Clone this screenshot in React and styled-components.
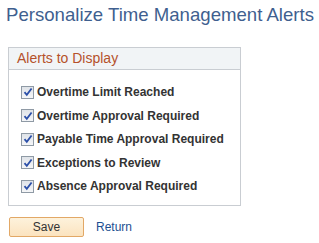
import React, { useState } from 'react'
import styled, { createGlobalStyle } from 'styled-components'

const GlobalStyle = createGlobalStyle`
	body {
		margin: 0;
		background: #fff;
		font-family: "Liberation Sans", Arial, sans-serif;
	}
`

const Page = styled.div`
	padding: 4px 8px 0 8px;
	width: 319px;
	box-sizing: border-box;
`

const Title = styled.h1`
	font-size: 18.6px;
	font-weight: normal;
	color: #3f5f8f;
	margin: 0 0 0 -2px;
	line-height: 22px;
	white-space: nowrap;
`

const Box = styled.div`
	margin-top: 21px;
	width: 233px;
	border: 1px solid #c9cdd2;
	box-sizing: border-box;
	padding-bottom: 11px;
`

const BoxHeader = styled.div`
	height: 21px;
	background: #f1f4f6;
	border-bottom: 1px solid #c9cdd2;
	color: #b5512a;
	font-size: 14px;
	line-height: 21px;
	padding-left: 8px;
`

const List = styled.div`
	display: flex;
	flex-direction: column;
	gap: 7.5px;
	padding: 14px 0 0 12px;
`

const Row = styled.label`
	display: flex;
	align-items: center;
	gap: 3px;
	height: 16px;
	font-size: 12px;
	font-weight: bold;
	color: #333;
	cursor: pointer;
`

const Check = styled.span`
	width: 11px;
	height: 11px;
	border: 1px solid #8f9aa5;
	background: linear-gradient(#dfe3e8, #f5f6f8);
	display: flex;
	align-items: center;
	justify-content: center;
	flex-shrink: 0;
`

const Actions = styled.div`
	display: flex;
	align-items: center;
	gap: 12px;
	margin-top: 11px;
	padding-left: 1px;
`

const SaveButton = styled.button`
	width: 75px;
	height: 20px;
	border: 1px solid #e2a866;
	border-radius: 2px;
	background: linear-gradient(#fdf2dc, #fbe3bf);
	font-family: inherit;
	font-size: 12px;
	color: #333;
	padding: 0;
	cursor: pointer;
`

const ReturnLink = styled.a`
	font-size: 12px;
	color: #1c4f91;
	text-decoration: none;
	cursor: pointer;
`

const alerts = [
	'Overtime Limit Reached',
	'Overtime Approval Required',
	'Payable Time Approval Required',
	'Exceptions to Review',
	'Absence Approval Required',
]

function Tick() {
	return (
		<svg width="10" height="10" viewBox="0 0 10 10">
			<path d="M1.5 5.2 L3.8 7.8 L8.6 1.5" fill="none" stroke="#2b4fa8" strokeWidth="1.8" />
		</svg>
	)
}

export default function App() {
	const [checked, setChecked] = useState(alerts.map(() => true))

	const toggle = (i) => setChecked(checked.map((c, j) => (j === i ? !c : c)))

	return (
		<Page>
			<GlobalStyle />
			<Title>Personalize Time Management Alerts</Title>
			<Box>
				<BoxHeader>Alerts to Display</BoxHeader>
				<List>
					{alerts.map((a, i) => (
						<Row key={a} onClick={() => toggle(i)}>
							<Check>{checked[i] && <Tick />}</Check>
							{a}
						</Row>
					))}
				</List>
			</Box>
			<Actions>
				<SaveButton>Save</SaveButton>
				<ReturnLink>Return</ReturnLink>
			</Actions>
		</Page>
	)
}
